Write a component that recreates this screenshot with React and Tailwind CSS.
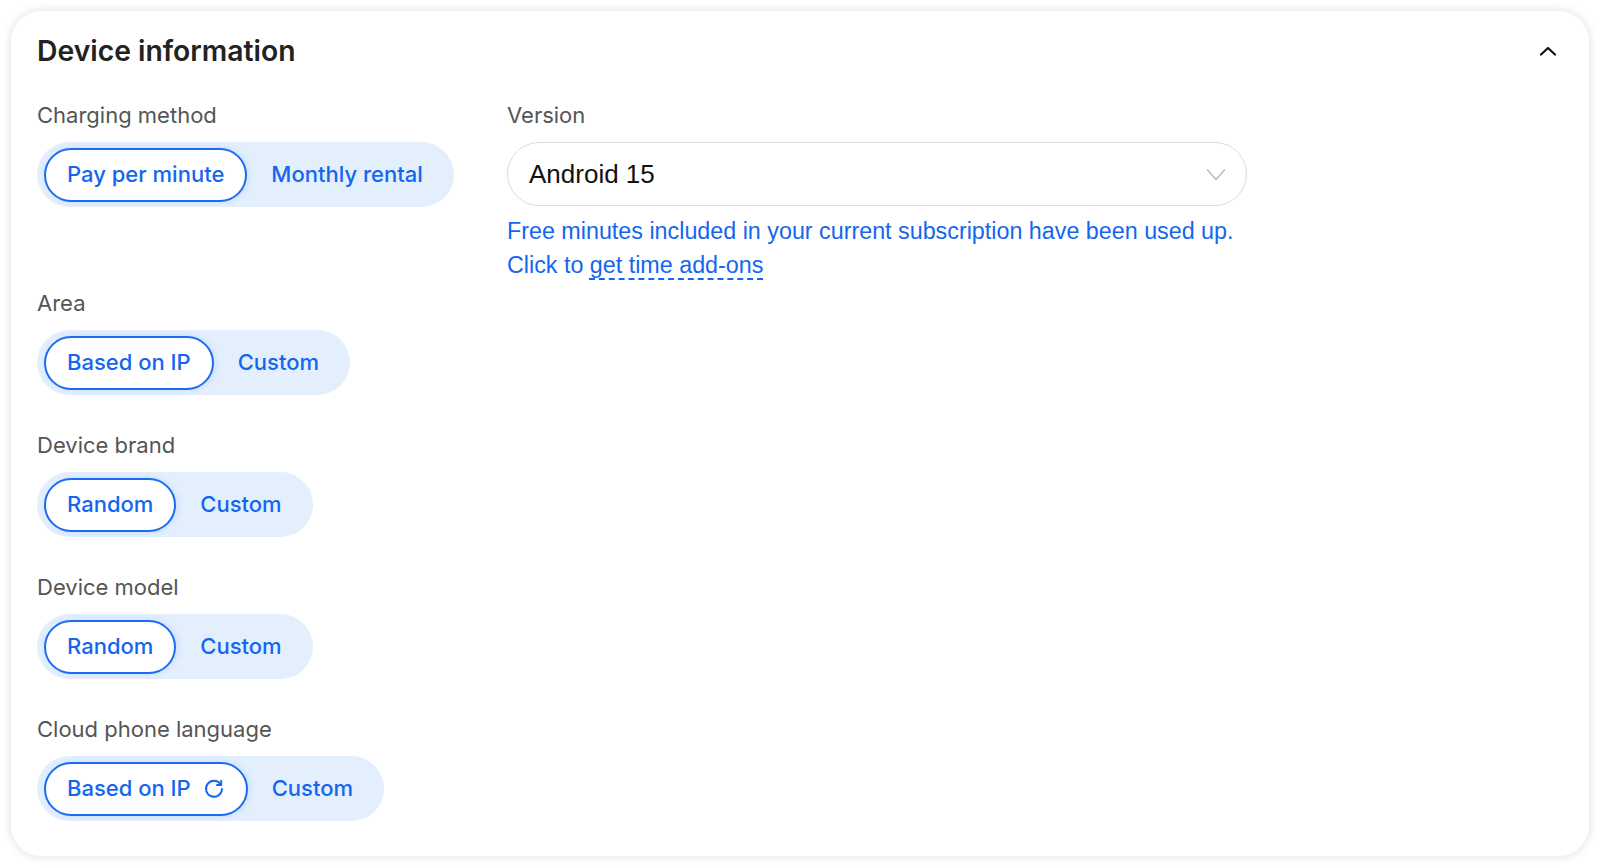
import React, { useState } from "react";

const label = "text-[22px] leading-[28px] text-[#555555]";

const Segmented = ({ options, value, onChange, icon }) => {
  return (
    <div className="inline-flex items-center h-[65px] rounded-full bg-[#e3effd] p-[7px] pr-0 self-start">
      {options.map((opt) => {
        const active = opt === value;
        return (
          <button
            key={opt}
            onClick={() => onChange(opt)}
            className={`h-[54px] flex items-center gap-[12px] rounded-full text-[22px] font-medium text-[#1466f0] border-[2px] ${
              active
                ? "bg-white border-[#1a6cf2] px-[21px] shadow-[2px_0_6px_rgba(20,102,240,0.12)]"
                : "border-transparent px-[22px] mr-[7px]"
            }`}
          >
            {opt}
            {active && icon ? icon : null}
          </button>
        );
      })}
    </div>
  );
};

const ReloadIcon = () => (
  <svg width="22" height="22" viewBox="0 0 22 22" fill="none">
    <path
      d="M17.6 6.2A8 8 0 1 0 19 11"
      stroke="#1466f0"
      strokeWidth="1.9"
      strokeLinecap="round"
    />
    <path
      d="M18.2 2.8v4.2H14"
      stroke="#1466f0"
      strokeWidth="1.9"
      strokeLinecap="round"
      strokeLinejoin="round"
    />
  </svg>
);

const Field = ({ title, children, className = "" }) => (
  <div className={`flex flex-col ${className}`}>
    <span className={label}>{title}</span>
    <div className="mt-[13px] flex flex-col">{children}</div>
  </div>
);

export default function App() {
  const [charging, setCharging] = useState("Pay per minute");
  const [area, setArea] = useState("Based on IP");
  const [brand, setBrand] = useState("Random");
  const [model, setModel] = useState("Random");
  const [lang, setLang] = useState("Based on IP");

  return (
    <div
      className="w-[1600px] h-[867px] bg-white p-[11px]"
      style={{ fontFamily: "Inter, 'Noto Sans', sans-serif" }}
    >
      <div className="h-[845px] rounded-[30px] bg-white shadow-[0_0_10px_rgba(0,0,0,0.14)] pl-[26px] pr-[32px] pt-[22px]">
        <div className="flex items-center justify-between h-[36px]">
          <h1 className="text-[28.3px] font-semibold text-[#222222]">
            Device information
          </h1>
          <svg width="18" height="10" viewBox="0 0 18 10" fill="none">
            <path
              d="M2 8.5L9 2l7 6.5"
              stroke="#111"
              strokeWidth="2.2"
              strokeLinecap="round"
              strokeLinejoin="round"
            />
          </svg>
        </div>

        <div className="mt-[32px] flex">
          <Field title="Charging method" className="w-[470px]">
            <Segmented
              options={["Pay per minute", "Monthly rental"]}
              value={charging}
              onChange={setCharging}
            />
          </Field>
          <Field title="Version" className="w-[740px]">
            <div className="h-[64px] rounded-full border border-[#dcdcdc] flex items-center justify-between pl-[21px] pr-[20px]">
              <span
                className="text-[26px] text-[#111]"
                style={{ fontFamily: "'Liberation Sans', Arial, sans-serif" }}
              >
                Android 15
              </span>
              <svg width="20" height="13" viewBox="0 0 20 13" fill="none">
                <path d="M1 1.5l9 10 9-10" stroke="#b8b8b8" strokeWidth="1.4" />
              </svg>
            </div>
            <p
              className="mt-[8px] text-[23.3px] leading-[34px] text-[#1466f0]"
              style={{ fontFamily: "'Liberation Sans', Arial, sans-serif" }}
            >
              Free minutes included in your current subscription have been used up.
              <br />
              Click to{" "}
              <a className="underline decoration-dashed decoration-[1.5px] underline-offset-[5px] cursor-pointer">
                get time add-ons
              </a>
            </p>
          </Field>
        </div>

        <Field title="Area" className="mt-[7px]">
          <Segmented
            options={["Based on IP", "Custom"]}
            value={area}
            onChange={setArea}
          />
        </Field>

        <Field title="Device brand" className="mt-[36px]">
          <Segmented
            options={["Random", "Custom"]}
            value={brand}
            onChange={setBrand}
          />
        </Field>

        <Field title="Device model" className="mt-[36px]">
          <Segmented
            options={["Random", "Custom"]}
            value={model}
            onChange={setModel}
          />
        </Field>

        <Field title="Cloud phone language" className="mt-[36px]">
          <Segmented
            options={["Based on IP", "Custom"]}
            value={lang}
            onChange={setLang}
            icon={<ReloadIcon />}
          />
        </Field>
      </div>
    </div>
  );
}
